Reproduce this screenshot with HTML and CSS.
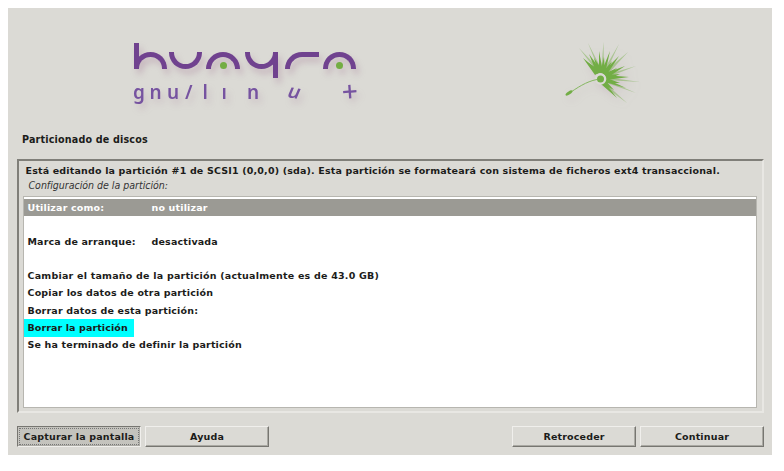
FILE: index.html
```html
<!DOCTYPE html>
<html lang="es">
<head>
<meta charset="utf-8">
<title>Particionado de discos</title>
<link rel="stylesheet" href="styles.css">
</head>
<body>
<main class="window">
  <header class="banner">
    <div class="brand">
      <div class="wordmark" role="img" aria-label="huayra">
        <i class="arch stem-left"></i>
        <i class="bowl"></i>
        <i class="arch dot third"></i>
        <i class="bowl stem-right"></i>
        <i class="hook"></i>
        <i class="arch dot last"></i>
      </div>
      <svg class="tagline" width="240" height="34" viewBox="0 0 240 34">
        <text y="20.5" x="0 16.5 34 52 69.5 88.500 114">gnu/lın</text>
        <text transform="translate(153 19) rotate(9) skewX(-14)">u</text>
        <text class="plus" transform="translate(209.500 24) rotate(-4)">+</text>
      </svg>
    </div>
    <svg class="flower" width="82" height="68" viewBox="560 38 82 68">
      <g class="seeds">
        <path class="faint" d="M579 48L598 73L602 72Z M588 43L600 73L603 72Z M603.500 42L601 73L604 73Z M619 44L602 73L605 74Z M628 52L603 73L606 76Z M636 66L605 75L606 78Z M640 82L605 77L606 80Z M636 93L604 79L604 82Z M627 103L603 81L601 84Z"/>
        <path d="M583 58L595 75L600 72Z M589 54L597 74L602 72Z M599 51L599 73L603 72Z M610 51L601 73L605 74Z M619 56L602 73L606 76Z M625 66L604 74L607 78Z M629 77L605 75L606 80Z M626 88L604 78L605 82Z M617 98L603 80L601 84Z"/>
        <path d="M587 62L596 74L601 71Z M594 58L598 73L603 71Z M604 57L600 73L605 73Z M612 61L602 73L606 75Z M617 68L604 74L607 78Z M620 74L605 75L607 80Z M620 83L604 77L605 83Z M614 90L604 79L602 84Z"/>
      </g>
      <circle class="gap" cx="600.5" cy="79" r="5.800"/>
      <circle class="core" cx="600.5" cy="79" r="3.5"/>
      <path class="stalk" d="M597 79.5C586 81.500 577 88 568 94"/>
      <ellipse class="core" cx="569" cy="93" rx="4" ry="1.500" transform="rotate(-34 569 93)"/>
    </svg>
  </header>
  <h1>Particionado de discos</h1>
  <section class="frame">
    <p class="message">Está editando la partición #1 de SCSI1 (0,0,0) (sda). Esta partición se formateará con sistema de ficheros ext4 transaccional.</p>
    <p class="hint">Configuración de la partición:</p>
    <ul class="list">
      <li class="selected"><span class="key">Utilizar como:</span><span>no utilizar</span></li>
      <li></li>
      <li><span class="key">Marca de arranque:</span><span>desactivada</span></li>
      <li></li>
      <li><span class="wide">Cambiar el tamaño de la partición (actualmente es de 43.0 GB)</span></li>
      <li><span>Copiar los datos de otra partición</span></li>
      <li><span>Borrar datos de esta partición:</span></li>
      <li><span class="mark">Borrar la partición</span></li>
      <li><span>Se ha terminado de definir la partición</span></li>
    </ul>
  </section>
  <footer class="actions">
    <button class="pressed">Capturar la pantalla</button>
    <button>Ayuda</button>
    <button class="next">Retroceder</button>
    <button>Continuar</button>
  </footer>
</main>
</body>
</html>
```
FILE: styles.css
```css
* { box-sizing: border-box; }
body { margin: 0; padding: 8px; background: #fff; color: #1c1c1a; font: bold 9.5px/17.2px "DejaVu Sans", sans-serif; letter-spacing: .17px; }
p, h1, ul { margin: 0; padding: 0; list-style: none; white-space: nowrap; }
.window { width: 764px; height: 447px; padding: 0 8px 8px 9px; background: #dbdad5; display: flex; flex-direction: column; }
.banner { height: 123px; display: flex; justify-content: space-between; padding: 30px 122px 0 116px; }
.brand { padding-top: 5px; }
.wordmark { height: 34px; padding-left: .5px; display: flex; gap: 1.5px; filter: drop-shadow(3px 5px 3px #9b6d8e55); }
.wordmark i { position: relative; width: 33.5px; height: 17.5px; margin-top: 8.5px; border: 5px solid #70428f; }
.wordmark .arch { border-bottom: 0; border-radius: 17px 17px 0 0; }
.wordmark .bowl { border-top: 0; border-radius: 0 0 17px 17px; }
.stem-left::before { content: ""; position: absolute; left: -5px; top: -13.5px; width: 5px; height: 26px; background: #70428f; }
.stem-right::after { content: ""; position: absolute; right: -5px; top: 0; width: 5px; height: 26px; background: #70428f; }
.dot::after { content: ""; position: absolute; left: 8.5px; top: 5px; width: 7px; height: 7px; border-radius: 50%; background: #73ad43; }
.wordmark .third { margin-left: 2.5px; margin-right: 3.5px; }
.wordmark .hook { margin-left: 5.5px; border-right: 0; border-bottom: 0; border-radius: 17px 0 0 0; }
.wordmark .last { margin-left: 2.5px; }
.tagline { display: block; margin-top: 1px; overflow: visible; fill: #7653a0; font: 600 19px "Noto Sans", sans-serif; letter-spacing: 0; filter: drop-shadow(3px 5px 3px #9b6d8e44); }
.plus { font-size: 28px; font-weight: 500; }
.flower { filter: drop-shadow(3px 4px 4px #9b6d8e33); }
.seeds, .core { fill: #72ad45; }
.faint { opacity: .45; }
.gap { fill: #dbdad5; }
.stalk { fill: none; stroke: #85b760; stroke-width: 1; }
h1 { font-size: 9.6px; padding-left: 5px; height: 28px; }
.frame { height: 254px; padding: 2px 5px 3px 4px; border: 2px solid; border-color: #807f79 #e8e7e3 #e8e7e3 #807f79; }
.message { padding-left: 2.5px; line-height: 15px; }
.hint { padding-left: 5.5px; font: italic 10.5px/14px "DejaVu Sans Condensed", "DejaVu Sans", sans-serif; font-stretch: condensed; letter-spacing: 0; color: #333; }
.list { height: 212px; margin-top: 4px; background: #fff; border: 1px solid #b7b6b0; padding-top: 2px; }
.list li { height: 17.1px; padding-left: 3.5px; display: flex; line-height: 17.1px; }
.selected { background: #9b9a94; color: #fff; }
.key { width: 124px; }
.wide { letter-spacing: .22px; }
.mark { height: 18px; background: #0ff; margin-left: -3.5px; padding: 0 6.5px 0 3.5px; letter-spacing: .1px; }
.actions { margin-top: auto; display: flex; gap: 4px; }
button { width: 124px; height: 21px; padding: 0; font: inherit; letter-spacing: inherit; color: inherit; background: #dbdad5; border: 1px solid; border-color: #f0efec #777671 #777671 #f0efec; box-shadow: inset -1px -1px #aaa9a3; }
.pressed { background: #c4c3bd; border-color: #777671 #f0efec #f0efec #777671; outline: 1px dotted #777; outline-offset: -3px; }
.next { margin-left: auto; }
```
